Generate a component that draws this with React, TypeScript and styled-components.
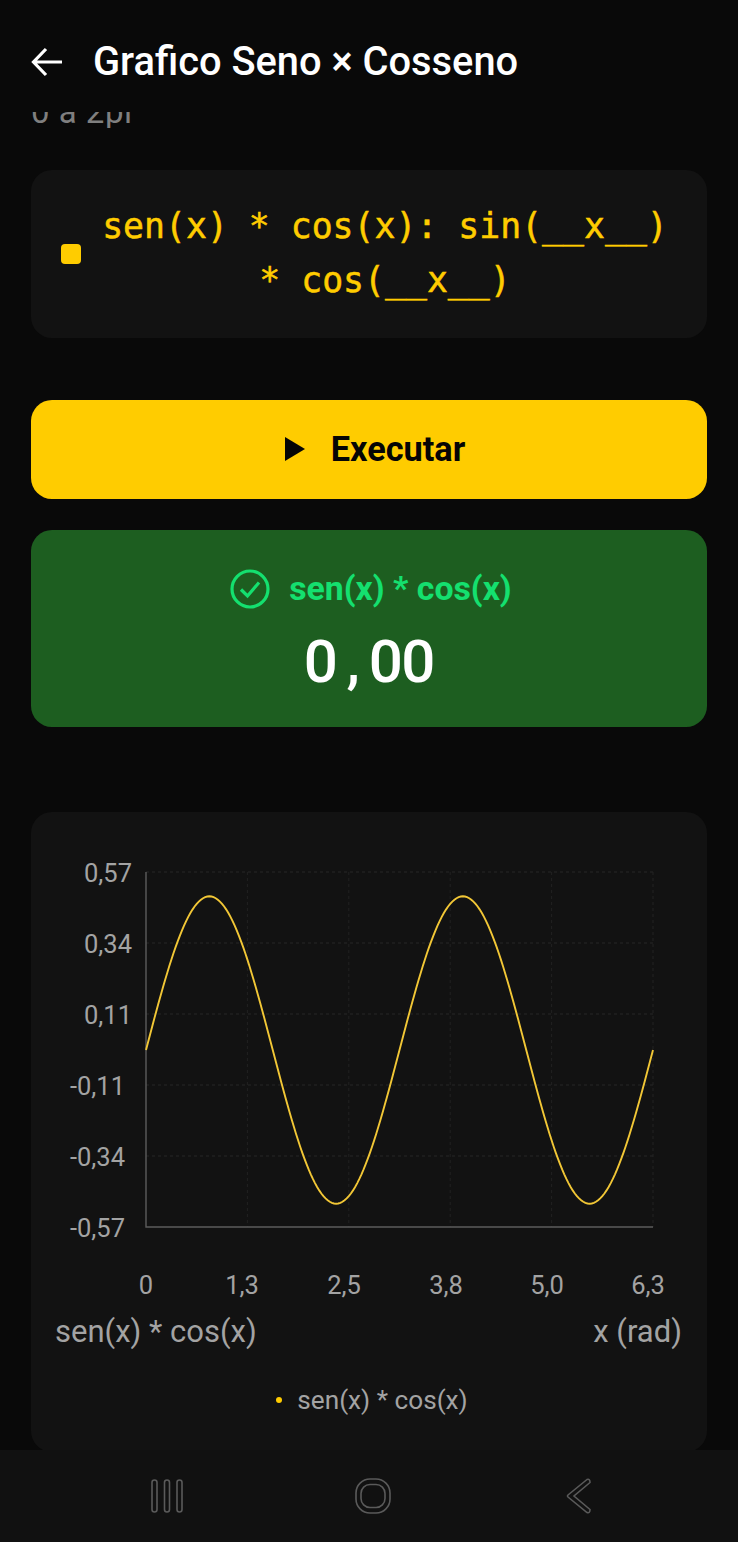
import React from "react";
import styled, { createGlobalStyle } from "styled-components";

const GlobalStyle = createGlobalStyle`
    html, body {
        margin: 0;
        padding: 0;
        background-color: #090909;
    }

    * {
        box-sizing: border-box;
    }
`;

const Screen = styled.div`
    width: 738px;
    height: 1542px;
    display: flex;
    flex-direction: column;
    overflow: hidden;
    background-color: #090909;
    font-family: Roboto, sans-serif;
`;

const Header = styled.header`
    height: 112px;
    flex: none;
    display: flex;
    align-items: flex-start;
    column-gap: 30px;
    padding: 40px 31px 0;
`;

const BackButton = styled.div`
    width: 32px;
    height: 44px;
    display: flex;
    align-items: center;
    color: #fff;
`;

const Title = styled.h1`
    margin: 0;
    font-size: 39.8px;
    line-height: 44px;
    font-weight: 500;
    color: #fff;
    white-space: nowrap;
`;

const ScrollArea = styled.main`
    flex: 1;
    min-height: 0;
    overflow: hidden;
    padding: 0 31px;
`;

const Subtitle = styled.div`
    height: 16px;
    overflow: hidden;
    margin-bottom: 42px;
    font-size: 33px;
    letter-spacing: 0.5px;
    color: #7f7f7f;

    span {
        display: block;
        margin-top: -16px;
        line-height: 32px;
    }
`;

const SeriesCard = styled.section`
    height: 168px;
    display: flex;
    align-items: center;
    padding: 0 30px;
    margin-bottom: 62px;
    border-radius: 21px;
    background-color: #121212;
`;

const Marker = styled.span`
    width: 20px;
    height: 20px;
    flex: none;
    border-radius: 4px;
    background-color: #ffcc00;
`;

const SeriesLabel = styled.div`
    flex: 1;
    padding: 0 0 2px 12px;
    text-align: center;
    font-family: "DejaVu Sans Mono", monospace;
    font-size: 34.8px;
    line-height: 54px;
    color: #ffcc00;
    -webkit-text-stroke: 0.5px #ffcc00;
`;

const RunButton = styled.button`
    width: 100%;
    height: 99px;
    display: flex;
    align-items: center;
    justify-content: center;
    column-gap: 26px;
    margin-bottom: 31px;
    padding: 0 0 2px 12px;
    border: 0;
    border-radius: 21px;
    background-color: #ffcc00;
    font-family: Roboto, sans-serif;
    font-size: 34.3px;
    font-weight: 700;
    color: #050505;
`;

const ResultCard = styled.section`
    height: 197px;
    display: flex;
    flex-direction: column;
    align-items: center;
    padding-top: 39px;
    margin-bottom: 85px;
    border-radius: 21px;
    background-color: #1d5e20;
`;

const ResultLabel = styled.div`
    display: flex;
    align-items: center;
    column-gap: 19px;
    padding-left: 4px;
    font-size: 33.8px;
    line-height: 38px;
    font-weight: 700;
    color: #14e06f;
`;

const ResultValue = styled.div`
    display: flex;
    margin-top: 18px;
    padding-left: 1px;
    font-size: 60px;
    line-height: 70px;
    font-weight: 500;
    color: #fff;
`;

const ValueCell = styled.span`
    width: 32.5px;
    display: flex;
    justify-content: center;
`;

const ChartCard = styled.section`
    height: 640px;
    padding: 44px 25px 0 24px;
    border-radius: 21px;
    background-color: #121212;
`;

const ChartSvg = styled.svg`
    display: block;
    width: 627px;
    height: 446px;

    text {
        font-family: Roboto, sans-serif;
        font-size: 25.5px;
        fill: #a3a3a3;
    }
`;

const AxisTitles = styled.div`
    display: flex;
    justify-content: space-between;
    margin-top: 13px;
    font-size: 31px;
    line-height: 34px;
    color: #a3a3a3;
`;

const Legend = styled.div`
    display: flex;
    align-items: center;
    justify-content: center;
    column-gap: 15px;
    margin-top: 35px;
    padding-left: 7px;
    font-size: 26.2px;
    line-height: 32px;
    color: #a3a3a3;
`;

const LegendDot = styled.span`
    width: 6px;
    height: 6px;
    border-radius: 50%;
    background-color: #ffcc00;
`;

const NavBar = styled.nav`
    height: 92px;
    flex: none;
    display: flex;
    align-items: center;
    justify-content: center;
    padding-left: 8px;
    background-color: #111;
`;

const NavSlot = styled.div`
    width: 206px;
    display: flex;
    justify-content: center;
`;

const LEFT = 91;
const RIGHT = 598;
const TOP = 16;
const BOTTOM = 371;

const yTicks = ["0,57", "0,34", "0,11", "-0,11", "-0,34", "-0,57"];
const xTicks = [
    { label: "0", x: 91 },
    { label: "1,3", x: 187 },
    { label: "2,5", x: 289 },
    { label: "3,8", x: 391 },
    { label: "5,0", x: 492 },
    { label: "6,3", x: 593 },
];

const curve = () => {
    const points: string[] = [];
    for (let i = 0; i <= 240; i++) {
        const t = (i / 240) * 2 * Math.PI;
        const px = LEFT + (i / 240) * (RIGHT - LEFT);
        const py = (TOP + BOTTOM) / 2 + 0.5 - (Math.sin(t) * Math.cos(t) * (BOTTOM - TOP)) / 1.155;
        points.push(`${px.toFixed(2)},${py.toFixed(2)}`);
    }
    return points.join(" ");
};

const Chart = () => {
    const step = (BOTTOM - TOP) / 5;
    const stepX = (RIGHT - LEFT) / 5;
    return (
        <ChartSvg viewBox="0 0 627 446">
            {yTicks.map((label, i) => (
                <g key={label}>
                    {i < 5 && (
                        <line
                            x1={LEFT}
                            x2={RIGHT}
                            y1={TOP + i * step}
                            y2={TOP + i * step}
                            stroke="#262626"
                            strokeDasharray="3 3"
                        />
                    )}
                    <text x={label.startsWith("-") ? 70 : 77} y={TOP + i * step + 9.5} textAnchor="end">
                        {label}
                    </text>
                </g>
            ))}
            {[1, 2, 3, 4, 5].map((i) => (
                <line
                    key={i}
                    x1={LEFT + i * stepX}
                    x2={LEFT + i * stepX}
                    y1={TOP}
                    y2={BOTTOM}
                    stroke="#222"
                    strokeDasharray="3 3"
                />
            ))}
            <path d={`M${LEFT} ${TOP}V${BOTTOM}H${RIGHT}`} fill="none" stroke="#5c5c5c" strokeWidth="1.4" />
            <polyline points={curve()} fill="none" stroke="#f2c736" strokeWidth="1.9" />
            {xTicks.map((tick) => (
                <text key={tick.label} x={tick.x} y={438} textAnchor="middle">
                    {tick.label}
                </text>
            ))}
        </ChartSvg>
    );
};

export default function App() {
    return (
        <Screen>
            <GlobalStyle />
            <Header>
                <BackButton>
                    <svg width="32" height="30" viewBox="0 0 32 30" fill="none" stroke="currentColor" strokeWidth="3.2">
                        <path d="M31 15H3M15 2L2.5 15L15 28" />
                    </svg>
                </BackButton>
                <Title>Grafico Seno × Cosseno</Title>
            </Header>
            <ScrollArea>
                <Subtitle>
                    <span>0 a 2pi</span>
                </Subtitle>
                <SeriesCard>
                    <Marker />
                    <SeriesLabel>sen(x) * cos(x): sin(__x__) * cos(__x__)</SeriesLabel>
                </SeriesCard>
                <RunButton>
                    <svg width="20" height="24" viewBox="0 0 20 24">
                        <path d="M0 0L20 12L0 24Z" fill="#050505" />
                    </svg>
                    Executar
                </RunButton>
                <ResultCard>
                    <ResultLabel>
                        <svg width="40" height="40" viewBox="0 0 40 40" fill="none" stroke="currentColor" strokeWidth="3.2">
                            <circle cx="20" cy="20" r="18" />
                            <path d="M11 20.5L17.5 27L29 13.5" />
                        </svg>
                        sen(x) * cos(x)
                    </ResultLabel>
                    <ResultValue>
                        {"0,00".split("").map((char, i) => (
                            <ValueCell key={i}>{char}</ValueCell>
                        ))}
                    </ResultValue>
                </ResultCard>
                <ChartCard>
                    <Chart />
                    <AxisTitles>
                        <span>sen(x) * cos(x)</span>
                        <span>x (rad)</span>
                    </AxisTitles>
                    <Legend>
                        <LegendDot />
                        sen(x) * cos(x)
                    </Legend>
                </ChartCard>
            </ScrollArea>
            <NavBar>
                <NavSlot>
                    <svg width="34" height="34" viewBox="0 0 34 34" fill="none" stroke="#5a5a5a" strokeWidth="1.6">
                        <rect x="2" y="1" width="5" height="32" rx="2.5" />
                        <rect x="14.5" y="1" width="5" height="32" rx="2.5" />
                        <rect x="27" y="1" width="5" height="32" rx="2.5" />
                    </svg>
                </NavSlot>
                <NavSlot>
                    <svg width="36" height="36" viewBox="0 0 36 36" fill="none" stroke="#5a5a5a" strokeWidth="1.6">
                        <rect x="1" y="1" width="34" height="34" rx="14" />
                        <rect x="6" y="6.5" width="24" height="23" rx="9" />
                    </svg>
                </NavSlot>
                <NavSlot>
                    <svg width="26" height="36" viewBox="0 0 26 36" fill="none" stroke="#5a5a5a" strokeWidth="1.6">
                        <path d="M21 1.5L2 17Q1 18 2 19L21 34.5Q24 35.5 24 31.5L8 18L24 4.5Q24 0.5 21 1.5Z" />
                    </svg>
                </NavSlot>
            </NavBar>
        </Screen>
    );
}
